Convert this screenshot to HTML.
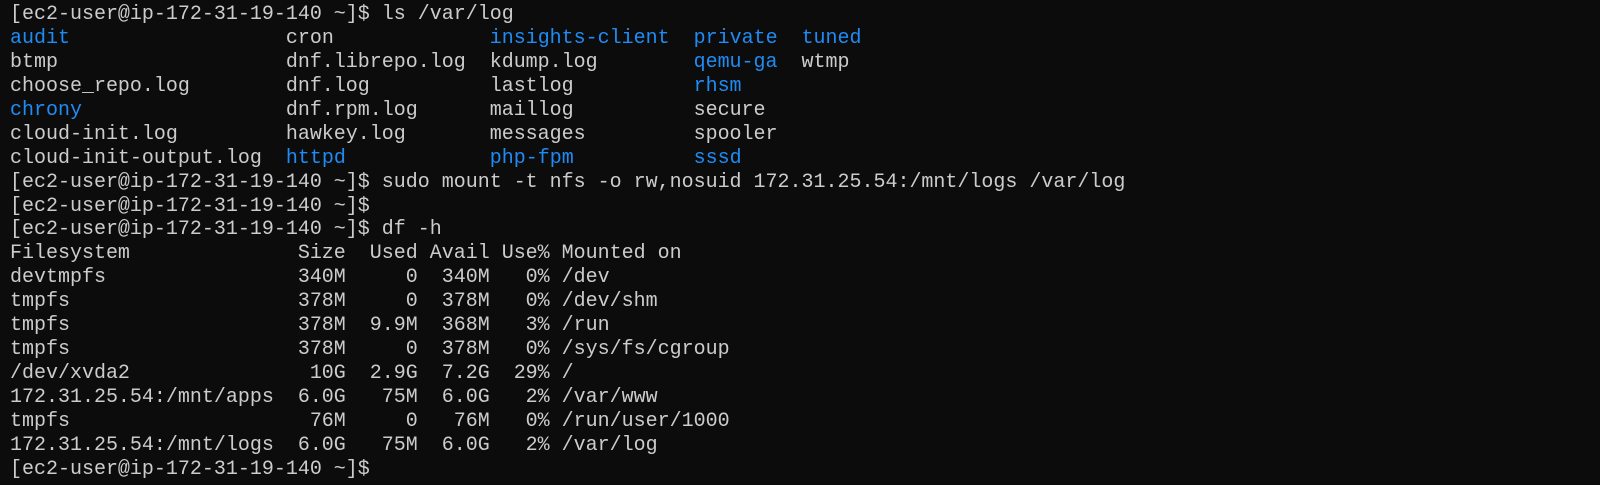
<!DOCTYPE html>
<html><head><meta charset="utf-8"><style>
html,body{margin:0;padding:0;background:#0c0c0c;width:1600px;height:485px;overflow:hidden}
#t{position:absolute;left:10px;top:3px;font-family:"Liberation Mono","DejaVu Sans Mono",monospace;font-size:19.99px;color:#cccccc}
#t div{height:23.95px;line-height:23.95px;white-space:pre}
b{font-weight:normal;color:#1f8cf5}
</style></head><body><div id="t"><div>[ec2-user@ip-172-31-19-140 ~]$ ls /var/log</div><div><b>audit</b>                  cron             <b>insights-client</b>  <b>private</b>  <b>tuned</b></div><div>btmp                   dnf.librepo.log  kdump.log        <b>qemu-ga</b>  wtmp</div><div>choose_repo.log        dnf.log          lastlog          <b>rhsm</b></div><div><b>chrony</b>                 dnf.rpm.log      maillog          secure</div><div>cloud-init.log         hawkey.log       messages         spooler</div><div>cloud-init-output.log  <b>httpd</b>            <b>php-fpm</b>          <b>sssd</b></div><div>[ec2-user@ip-172-31-19-140 ~]$ sudo mount -t nfs -o rw,nosuid 172.31.25.54:/mnt/logs /var/log</div><div>[ec2-user@ip-172-31-19-140 ~]$</div><div>[ec2-user@ip-172-31-19-140 ~]$ df -h</div><div>Filesystem              Size  Used Avail Use% Mounted on</div><div>devtmpfs                340M     0  340M   0% /dev</div><div>tmpfs                   378M     0  378M   0% /dev/shm</div><div>tmpfs                   378M  9.9M  368M   3% /run</div><div>tmpfs                   378M     0  378M   0% /sys/fs/cgroup</div><div>/dev/xvda2               10G  2.9G  7.2G  29% /</div><div>172.31.25.54:/mnt/apps  6.0G   75M  6.0G   2% /var/www</div><div>tmpfs                    76M     0   76M   0% /run/user/1000</div><div>172.31.25.54:/mnt/logs  6.0G   75M  6.0G   2% /var/log</div><div>[ec2-user@ip-172-31-19-140 ~]$</div></div></body></html>
